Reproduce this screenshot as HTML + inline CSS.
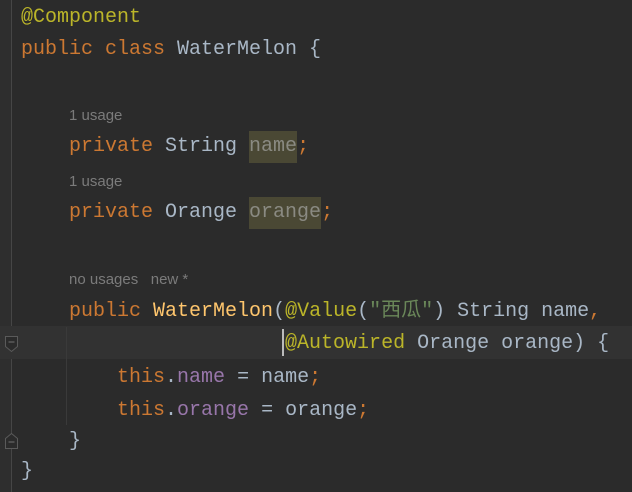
<!DOCTYPE html><html><head><style>
body{margin:0;width:632px;height:492px;background:#2b2b2b;overflow:hidden;position:relative;font-family:"Liberation Mono","Noto Sans CJK SC",monospace;font-size:20px;color:#a9b7c6}
.l{position:absolute;left:21px;white-space:pre;line-height:32px;height:32px}
.k{color:#cc7832}.a{color:#bbb529}.f{color:#9876aa}.s{color:#6a8759}.m{color:#ffc66d}
.h{position:absolute;font-family:"Liberation Sans",sans-serif;font-size:15px;color:#7b7b7b;white-space:pre}
.hl{background:#4a4834;color:#8a8a82;display:inline-block;height:32px;vertical-align:top}
</style></head><body>
<div style="position:absolute;left:0;top:0;width:11px;height:492px;background:#2e2e2e"></div>
<div style="position:absolute;left:11px;top:0;width:1px;height:492px;background:#464646"></div>
<div style="position:absolute;left:0;top:326px;width:632px;height:33px;background:#323232"></div>
<div style="position:absolute;left:66px;top:327px;width:1px;height:98px;background:#3a3a3a"></div>
<svg style="position:absolute;left:4px;top:335px" width="16" height="20"><path d="M1.5 1.5h12v10l-6 5l-6-5z" fill="#2b2b2b" stroke="#5a5a5a"/><path d="M4.5 7h6" stroke="#707070"/></svg>
<svg style="position:absolute;left:4px;top:430px" width="16" height="20"><path d="M1.5 18.5h12v-10l-6-5l-6 5z" fill="#2b2b2b" stroke="#5a5a5a"/><path d="M4.5 12h6" stroke="#707070"/></svg>
<div style="position:absolute;left:282px;top:329px;width:2px;height:27px;background:#bbbbbb"></div>
<div class="l" style="top:2px"><span class="a">@Component</span></div>
<div class="l" style="top:34px"><span class="k">public class </span>WaterMelon {</div>
<div class="h" style="left:69px;top:107px">1 usage</div>
<div class="l" style="top:131px">    <span class="k">private </span>String <span class="hl">name</span><span class="k">;</span></div>
<div class="h" style="left:69px;top:173px">1 usage</div>
<div class="l" style="top:197px">    <span class="k">private </span>Orange <span class="hl">orange</span><span class="k">;</span></div>
<div class="h" style="left:69px;top:271px">no usages   new *</div>
<div class="l" style="top:296px">    <span class="k">public </span><span class="m">WaterMelon</span>(<span class="a">@Value</span>(<span class="s">"西瓜"</span>) String name<span class="k">,</span></div>
<div class="l" style="top:328px">                      <span class="a">@Autowired</span> Orange orange) {</div>
<div class="l" style="top:362px">        <span class="k">this</span>.<span class="f">name</span> = name<span class="k">;</span></div>
<div class="l" style="top:395px">        <span class="k">this</span>.<span class="f">orange</span> = orange<span class="k">;</span></div>
<div class="l" style="top:426px">    }</div>
<div class="l" style="top:456px">}</div>
</body></html>
